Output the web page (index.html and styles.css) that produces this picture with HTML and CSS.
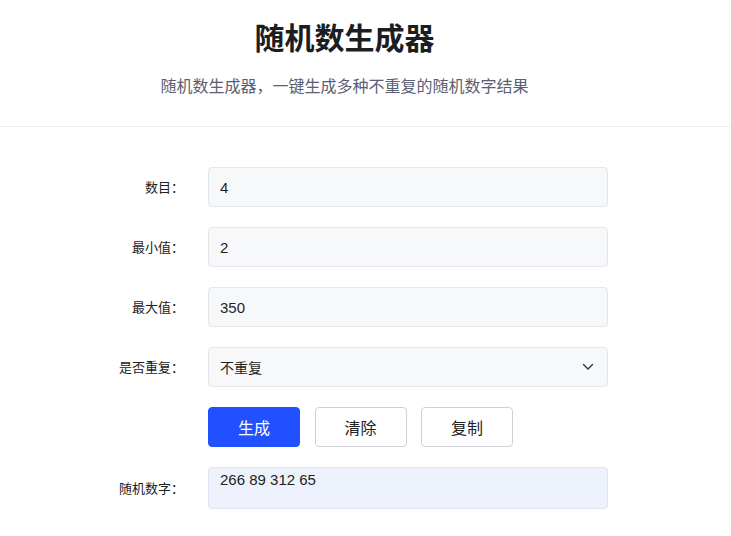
FILE: index.html
```html
<!DOCTYPE html>
<html lang="zh-CN">
<head>
<meta charset="utf-8">
<title>随机数生成器</title>
<link rel="stylesheet" href="styles.css">
</head>
<body>
<header class="hero">
  <h1 class="title">随机数生成器</h1>
  <p class="subtitle">随机数生成器，一键生成多种不重复的随机数字结果</p>
</header>
<main class="form">
  <label class="label">数目：</label>
  <div class="field"><span class="value">4</span></div>

  <label class="label">最小值：</label>
  <div class="field"><span class="value">2</span></div>

  <label class="label">最大值：</label>
  <div class="field"><span class="value">350</span></div>

  <label class="label">是否重复：</label>
  <div class="field select">
    <span class="value cjk">不重复</span>
    <svg class="chevron" width="12" height="8" viewBox="0 0 12 8"><path d="M1.5 1.5 L6 6 L10.5 1.5" fill="none" stroke="#333" stroke-width="1.4" stroke-linecap="round" stroke-linejoin="round"/></svg>
  </div>

  <span class="label"></span>
  <div class="actions">
    <button class="btn primary">生成</button>
    <button class="btn">清除</button>
    <button class="btn">复制</button>
  </div>

  <label class="label">随机数字：</label>
  <div class="field result"><span class="value">266 89 312 65</span></div>
</main>
</body>
</html>
```

FILE: styles.css
```css
* { box-sizing: border-box; }
body {
  margin: 0;
  background: #fff;
  font-family: "Liberation Sans", "Noto Sans CJK SC", sans-serif;
  color: #222;
}
.hero {
  height: 127px;
  border-bottom: 1px solid #eeeff1;
  text-align: center;
  padding: 17px 42px 0 0;
}
.title {
  margin: 0;
  font-family: "Noto Sans CJK SC", sans-serif;
  font-size: 30px;
  line-height: 38px;
  font-weight: 700;
  color: #1c1d21;
}
.subtitle {
  margin: 18px 0 0;
  font-family: "Noto Sans CJK SC", sans-serif;
  font-size: 16px;
  line-height: 24px;
  color: #5a6072;
}
.form {
  display: grid;
  grid-template-columns: 84px 400px;
  column-gap: 24px;
  row-gap: 20px;
  padding-left: 100px;
  margin-top: 40px;
  align-items: center;
}
.label {
  text-align: right;
  font-family: "Noto Sans CJK SC", sans-serif;
  font-size: 13px;
  line-height: 18px;
  color: #222;
  white-space: nowrap;
  padding-bottom: 1px;
}
.field {
  height: 40px;
  background: #f7f8fa;
  border: 1px solid #e4e6eb;
  border-radius: 4px;
  display: flex;
  align-items: center;
  padding: 0 11px;
}
.value {
  font-size: 15px;
  color: #1e1f24;
}
.cjk {
  font-family: "Noto Sans CJK SC", sans-serif;
  font-size: 14px;
}
.select { justify-content: space-between; padding-right: 13px; }
.chevron { display: block; }
.actions {
  display: flex;
  gap: 14.5px;
}
.btn {
  width: 92px;
  height: 40px;
  border: 1px solid #cfd1d6;
  border-radius: 4px;
  background: #fff;
  font-family: "Noto Sans CJK SC", sans-serif;
  font-size: 16px;
  color: #222;
  padding: 0;
}
.btn.primary {
  background: #2150ff;
  border-color: #2150ff;
  color: #fff;
}
.result {
  height: 42px;
  align-items: flex-start;
  padding-top: 3px;
  background: #edf1fb;
  border-color: #dfe4f0;
}
```
